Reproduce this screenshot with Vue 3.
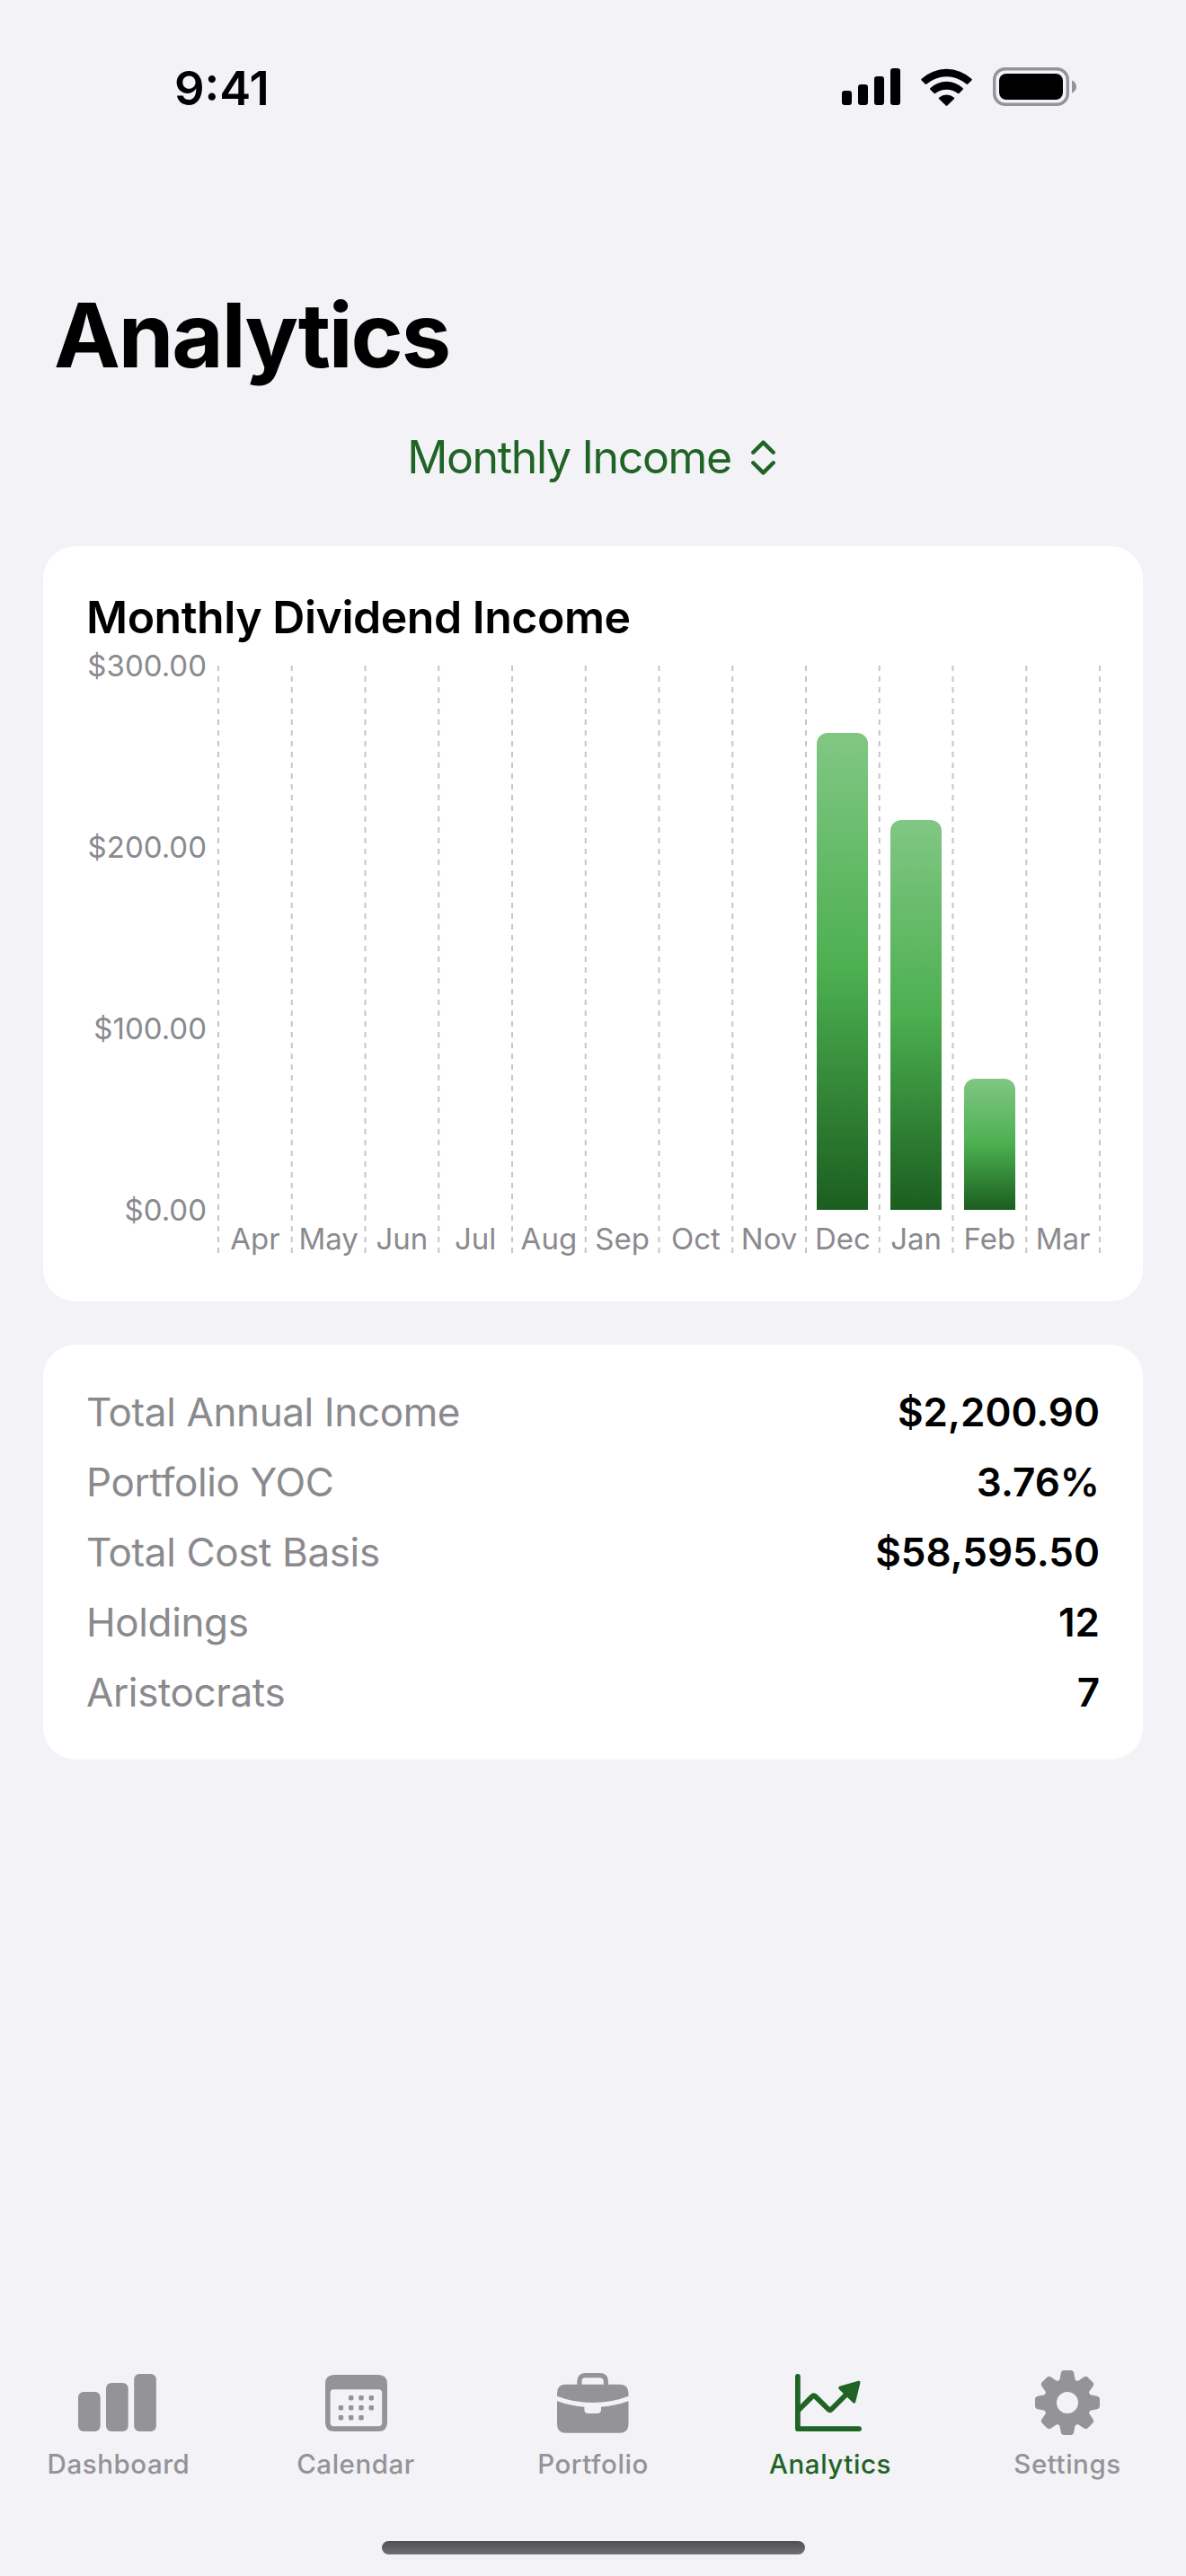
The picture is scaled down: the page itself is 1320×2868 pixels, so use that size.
<template>
  <div class="screen">
    <!-- Status bar -->
    <header class="status-bar">
      <span class="clock">9:41</span>
      <div class="status-icons">
        <svg class="signal" viewBox="0 0 65 41">
          <rect x="0" y="25" width="11" height="16" rx="3.2" />
          <rect x="18" y="18" width="11" height="23" rx="3.2" />
          <rect x="36" y="9" width="11" height="32" rx="3.2" />
          <rect x="54" y="0" width="11" height="41" rx="3.2" />
        </svg>
        <svg class="wifi" viewBox="0 0 57 42">
          <path d="M.6 13.4Q-.3 12.5.7 11.7A41 41 0 0 1 56.3 11.7Q57.3 12.5 56.4 13.4L52.3 17.6Q51.5 18.4 50.6 17.6A33.6 33.6 0 0 0 6.4 17.6Q5.5 18.4 4.7 17.6Z" />
          <path d="M10.4 23.7Q9.5 22.8 10.5 21.9A26.5 26.5 0 0 1 46.5 21.9Q47.5 22.8 46.6 23.7L42.6 27.7Q41.7 28.6 40.7 27.8A20 20 0 0 0 16.3 27.8Q15.3 28.6 14.4 27.7Z" />
          <path d="M20.2 34.2Q19.3 33.3 20.3 32.5A13 13 0 0 1 36.7 32.5Q37.7 33.3 36.8 34.2L29.3 41.5Q28.5 42.3 27.7 41.5Z" />
        </svg>
        <svg class="battery" viewBox="0 0 93 43">
          <rect x="1.7" y="1.7" width="81.6" height="39.6" rx="12" fill="none" stroke="#949398" stroke-width="3.4" />
          <rect x="7" y="7" width="71" height="29" rx="8" />
          <path d="M88 14.5C91 15.6 93 18.2 93 21.5S91 27.4 88 28.5Z" fill="#949398" />
        </svg>
      </div>
    </header>

    <main class="content">
      <h1 class="page-title">Analytics</h1>

      <button class="picker" type="button">
        <span>{{ selectedChart }}</span>
        <svg viewBox="0 0 27 39">
          <path d="M2.3 13.7L13.5 2.6L24.7 13.7M2.3 25.3L13.5 36.4L24.7 25.3" />
        </svg>
      </button>

      <!-- Chart card -->
      <section class="card chart-card">
        <h2 class="card-title">Monthly Dividend Income</h2>
        <div class="chart">
          <div class="y-axis">
            <span v-for="tick in ticks" :key="tick">{{ tick }}</span>
          </div>
          <div class="plot">
            <svg class="grid-lines" viewBox="0 0 983 654">
              <line v-for="n in 13" :key="n" :x1="1 + (n - 1) * 81.75" :x2="1 + (n - 1) * 81.75" y1="0" y2="654" />
            </svg>
            <div v-for="item in months" :key="item.label" class="month">
              <div class="bar-area">
                <div v-if="item.value" class="bar" :style="{ height: barHeight(item.value) }"></div>
              </div>
              <span class="month-label">{{ item.label }}</span>
            </div>
          </div>
        </div>
      </section>

      <!-- Summary card -->
      <section class="card summary-card">
        <div v-for="row in summary" :key="row.label" class="summary-row">
          <span class="summary-label">{{ row.label }}</span>
          <span class="summary-value">{{ row.value }}</span>
        </div>
      </section>
    </main>

    <!-- Tab bar -->
    <nav class="tab-bar">
      <div v-for="tab in tabs" :key="tab" class="tab" :class="{ active: tab === activeTab }">
        <div class="tab-icon">
          <svg v-if="tab === 'Dashboard'" class="icon-bars" width="87" height="64" viewBox="0 0 87 64">
            <rect x="0" y="20" width="24.7" height="44" rx="6" />
            <rect x="31" y="10" width="24.7" height="54" rx="6" />
            <rect x="62.2" y="0" width="24.7" height="64" rx="6" />
          </svg>
          <svg v-else-if="tab === 'Calendar'" width="69" height="63" viewBox="0 0 69 63">
            <path fill-rule="evenodd" d="M10 0H59Q69 0 69 10V53Q69 63 59 63H10Q0 63 0 53V10Q0 0 10 0ZM9.5 16.3Q5.6 16.3 5.6 20.2V53.3Q5.6 57.3 9.5 57.3H59.3Q63.2 57.3 63.2 53.3V20.2Q63.2 16.3 59.3 16.3Z" />
            <rect v-for="dot in calendarDots" :key="dot.join()" :x="dot[0]" :y="dot[1]" width="5.4" height="5.4" rx="1.4" />
          </svg>
          <svg v-else-if="tab === 'Portfolio'" width="80" height="67" viewBox="0 0 80 67">
            <path d="M24.9 13.5V9.5Q24.9 2.6 31.8 2.6H47.6Q54.4 2.6 54.4 9.5V13.5" fill="none" stroke="currentColor" stroke-width="5.2" />
            <path d="M0 25.7V22.5Q0 12.7 9.8 12.7H69.7Q79.5 12.7 79.5 22.5V25.7Q61 33 39.7 33T0 25.7Z" />
            <path d="M0 31.2Q15 36.6 30.4 37.8V40.7Q30.4 44.9 34.6 44.9H44.8Q49 44.9 49 40.7V37.8Q64.5 36.6 79.5 31.2V57Q79.5 66.8 69.7 66.8H9.8Q0 66.8 0 57Z" />
          </svg>
          <svg v-else-if="tab === 'Analytics'" class="icon-trend" width="74" height="64" viewBox="0 0 74 64">
            <g fill="none" stroke="currentColor" stroke-width="5.8" stroke-linecap="round" stroke-linejoin="round">
              <path d="M2.9 2.9V61.1H71.1" />
              <path d="M3.5 40.5L18.9 25.1Q20.7 23.3 22.5 25.1L36.9 39.2Q38.7 41 40.5 39.2L58 21.7" />
            </g>
            <path d="M50 15.6L70.7 9.6L65.5 30.8Z" stroke="currentColor" stroke-width="3.6" stroke-linejoin="round" />
          </svg>
          <svg v-else width="72" height="72" viewBox="-36 -36 72 72">
            <circle r="19.3" fill="none" stroke="currentColor" stroke-width="14.6" />
            <path v-for="n in 8" :key="n" :transform="`rotate(${n * 45})`" d="M-9.8 -24.2Q-8.8 -24.5 -8.4 -26.5L-7.2 -33Q-6.6 -36 -3.6 -36H3.6Q6.6 -36 7.2 -33L8.4 -26.5Q8.8 -24.5 9.8 -24.2Z" />
          </svg>
        </div>
        <span class="tab-label">{{ tab }}</span>
      </div>
    </nav>
    <div class="home-indicator"></div>
  </div>
</template>

<script setup>
import { ref } from 'vue'

const selectedChart = ref('Monthly Income')
const activeTab = ref('Analytics')

const tabs = ['Dashboard', 'Calendar', 'Portfolio', 'Analytics', 'Settings']

const ticks = ['$300.00', '$200.00', '$100.00', '$0.00']
const maxValue = 300

const months = [
  { label: 'Apr', value: 0 },
  { label: 'May', value: 0 },
  { label: 'Jun', value: 0 },
  { label: 'Jul', value: 0 },
  { label: 'Aug', value: 0 },
  { label: 'Sep', value: 0 },
  { label: 'Oct', value: 0 },
  { label: 'Nov', value: 0 },
  { label: 'Dec', value: 262.87 },
  { label: 'Jan', value: 214.85 },
  { label: 'Feb', value: 72.28 },
  { label: 'Mar', value: 0 }
]

const barHeight = (value) => (value / maxValue) * 100 + '%'

const summary = [
  { label: 'Total Annual Income', value: '$2,200.90' },
  { label: 'Portfolio YOC', value: '3.76%' },
  { label: 'Total Cost Basis', value: '$58,595.50' },
  { label: 'Holdings', value: '12' },
  { label: 'Aristocrats', value: '7' }
]

// x / y of each day square in the calendar icon
const calendarDots = [
  [26, 23], [37.3, 23], [48.6, 23],
  [14.7, 34], [26, 34], [37.3, 34], [48.6, 34],
  [14.7, 45], [26, 45], [37.3, 45]
]
</script>

<style>
body {
  background: #f2f2f7;
}
</style>

<style scoped>
.screen {
  display: flex;
  flex-direction: column;
  width: 1320px;
  height: 2868px;
  background: #f2f2f7;
  color: #000;
  font-family: Inter, "Liberation Sans", sans-serif;
}

.status-bar {
  display: flex;
  justify-content: space-between;
  align-items: center;
  height: 195px;
  padding: 0 122px 0 194px;
  box-sizing: border-box;
}

.clock {
  font-size: 52.5px;
  font-weight: 600;
}

.status-icons {
  display: flex;
  align-items: center;
  gap: 23px;
  padding-bottom: 2px;
}

.signal {
  width: 65px;
  height: 41px;
}

.wifi {
  width: 57px;
  height: 42px;
}

.battery {
  width: 93px;
  height: 43px;
}

.content {
  display: flex;
  flex-direction: column;
  flex: 1;
  padding: 118px 48px 0;
}

.page-title {
  margin: 0 0 0 12px;
  font-size: 99px;
  line-height: 120px;
  font-weight: 700;
  letter-spacing: -2.1px;
}

.picker {
  display: flex;
  align-items: center;
  justify-content: center;
  gap: 22px;
  height: 64px;
  margin: 44px 0 67px;
  padding: 0 4px 0 0;
  border: 0;
  background: none;
  color: #1f6425;
  font-family: inherit;
  font-size: 50px;
  line-height: 64px;
  letter-spacing: -1.35px;
}

.picker svg {
  width: 27px;
  height: 39px;
  fill: none;
  stroke: currentColor;
  stroke-width: 4.4;
  stroke-linecap: round;
  stroke-linejoin: round;
}

.card {
  border-radius: 36px;
  background: #fff;
}

.chart-card {
  padding: 48px 48px 54px;
}

.card-title {
  margin: 0;
  font-size: 50px;
  line-height: 62px;
  font-weight: 600;
  letter-spacing: -0.47px;
}

.chart {
  display: flex;
}

.y-axis {
  display: flex;
  flex-direction: column;
  justify-content: space-between;
  width: 147px;
  height: 652px;
  padding-right: 13px;
  box-sizing: border-box;
  color: #8a8a8e;
  font-size: 33px;
  line-height: 46px;
  text-align: right;
  white-space: nowrap;
}

.plot {
  position: relative;
  display: grid;
  grid-template-columns: repeat(12, 1fr);
  width: 981px;
  height: 654px;
  margin-top: 23px;
}

.grid-lines {
  position: absolute;
  top: 0;
  left: -1px;
  width: 983px;
  height: 654px;
  stroke: #c6c6c8;
  stroke-width: 2;
  stroke-dasharray: 6 6;
}

.month {
  position: relative;
  display: flex;
  flex-direction: column;
  align-items: center;
}

.bar-area {
  display: flex;
  align-items: flex-end;
  width: 70%;
  height: 606px;
}

.bar {
  width: 100%;
  border-radius: 12px 12px 0 0;
  background: linear-gradient(to top, #1b5e20, #4caf50 50%, #81c784);
}

.month-label {
  padding-top: 16px;
  color: #8a8a8e;
  font-size: 33px;
  line-height: 32px;
}

.summary-card {
  margin-top: 48px;
  padding: 36px 48px;
}

.summary-row {
  display: flex;
  justify-content: space-between;
  font-size: 44px;
  line-height: 78px;
}

.summary-label {
  color: #8a8a8e;
  letter-spacing: -0.38px;
}

.summary-value {
  font-weight: 600;
}

.tab-bar {
  display: grid;
  grid-template-columns: repeat(5, 1fr);
  height: 190px;
}

.tab {
  display: flex;
  flex-direction: column;
  align-items: center;
  color: #949398;
}

.tab.active {
  color: #1f6425;
}

.tab-icon {
  display: flex;
  align-items: center;
  justify-content: center;
  height: 72px;
  margin-bottom: 12px;
}

.tab-icon svg {
  fill: currentColor;
}

.tab-icon .icon-bars {
  margin-right: 3px;
}

.tab-icon .icon-trend {
  margin-right: 4px;
}

.tab-label {
  font-size: 29.5px;
  line-height: 41px;
  font-weight: 500;
  letter-spacing: 0.55px;
}

.home-indicator {
  width: 471px;
  height: 15px;
  margin: 0 auto 24px;
  border-radius: 8px;
  background: linear-gradient(#505052, #707072);
}
</style>
